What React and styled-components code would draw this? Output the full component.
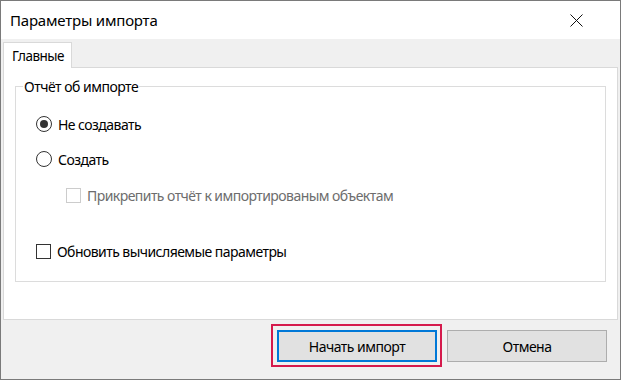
import React from "react";
import styled, { createGlobalStyle } from "styled-components";

const Global = createGlobalStyle`
  html, body { margin: 0; padding: 0; background: #ffffff; }
  body { font-family: "Segoe UI", "Noto Sans", "Liberation Sans", sans-serif; }
  * { box-sizing: border-box; }
`;

const Window = styled.div`
  width: 621px;
  height: 380px;
  border: 1px solid #7a7a7a;
  display: flex;
  flex-direction: column;
  background: #f0f0f0;
  color: #000;
  font-size: 14px;
`;

const TitleBar = styled.div`
  height: 38px;
  background: #ffffff;
  display: flex;
  align-items: center;
  justify-content: space-between;
  padding: 0 37px 0 9px;
  flex: none;
`;

const Title = styled.div`
  font-size: 15px;
  letter-spacing: -0.2px;
`;

const CloseIcon = () => (
  <svg width="13" height="13" viewBox="0 0 13 13">
    <path d="M0.5 0.5 L12.5 12.5 M12.5 0.5 L0.5 12.5" stroke="#111" strokeWidth="1" fill="none" />
  </svg>
);

const Body = styled.div`
  flex: 1;
  display: flex;
  flex-direction: column;
  padding: 3px 2px 0 2px;
`;

const TabStrip = styled.div`
  display: flex;
  height: 26px;
  position: relative;
  z-index: 1;
  margin-bottom: -1px;
`;

const Tab = styled.div`
  background: #ffffff;
  border: 1px solid #d9d9d9;
  border-bottom: none;
  padding: 0 7px 0 8px;
  display: flex;
  align-items: center;
  font-size: 13.5px;
  letter-spacing: -0.5px;
`;

const Panel = styled.div`
  background: #ffffff;
  border: 1px solid #d9d9d9;
  height: 253px;
  padding: 9px 11px 0 11px;
`;

const Group = styled.fieldset`
  margin: 0;
  border: 1px solid #dcdcdc;
  height: 205px;
  padding: 18px 0 0 20px;
  display: flex;
  flex-direction: column;
`;

const Legend = styled.legend`
  font-size: 14px;
  padding: 0 1px;
  margin-left: -13px;
  letter-spacing: -0.5px;
`;

const Option = styled.label`
  display: flex;
  align-items: center;
  gap: 6px;
  height: 20px;
  margin-left: ${(p) => p.$indent || 0}px;
  margin-bottom: ${(p) => p.$after || 0}px;
  color: ${(p) => (p.$disabled ? "#6d6d6d" : "#000")};
  font-size: 14px;
  letter-spacing: -0.55px;
`;

const Radio = styled.span`
  width: 16px;
  height: 16px;
  border-radius: 50%;
  border: 1px solid #333;
  display: flex;
  align-items: center;
  justify-content: center;
  flex: none;
  &::after {
    content: "";
    width: 8px;
    height: 8px;
    border-radius: 50%;
    background: ${(p) => (p.$checked ? "#333" : "transparent")};
  }
`;

const Check = styled.span`
  width: 15px;
  height: 15px;
  border: 1px solid ${(p) => (p.$disabled ? "#cccccc" : "#333")};
  background: #fff;
  flex: none;
`;

const Footer = styled.div`
  flex: 1;
  display: flex;
  justify-content: flex-end;
  align-items: flex-start;
  padding: 4px 11px 0 0;
  gap: 5px;
`;

const Highlight = styled.div`
  border: 2px solid #d51a4c;
  padding: 4px 3px 3px 4px;
`;

const Button = styled.button`
  width: 160px;
  height: 32px;
  margin-top: ${(p) => p.$top || 0}px;
  background: #e1e1e1;
  border: ${(p) => (p.$focused ? "2px solid #0078d7" : "1px solid #adadad")};
  font-family: inherit;
  font-size: 14px;
  letter-spacing: -0.5px;
  color: #000;
  padding: 0;
`;

export default function App() {
  return (
    <>
      <Global />
      <Window>
        <TitleBar>
          <Title>Параметры импорта</Title>
          <CloseIcon />
        </TitleBar>
        <Body>
          <TabStrip>
            <Tab>Главные</Tab>
          </TabStrip>
          <Panel>
            <Group>
              <Legend>Отчёт об импорте</Legend>
              <Option $after={15}>
                <Radio $checked />
                Не создавать
              </Option>
              <Option $after={16}>
                <Radio />
                Создать
              </Option>
              <Option $indent={30} $after={36} $disabled>
                <Check $disabled />
                Прикрепить отчёт к импортированым объектам
              </Option>
              <Option>
                <Check />
                Обновить вычисляемые параметры
              </Option>
            </Group>
          </Panel>
          <Footer>
            <Highlight>
              <Button $focused>Начать импорт</Button>
            </Highlight>
            <Button $top={6}>Отмена</Button>
          </Footer>
        </Body>
      </Window>
    </>
  );
}
